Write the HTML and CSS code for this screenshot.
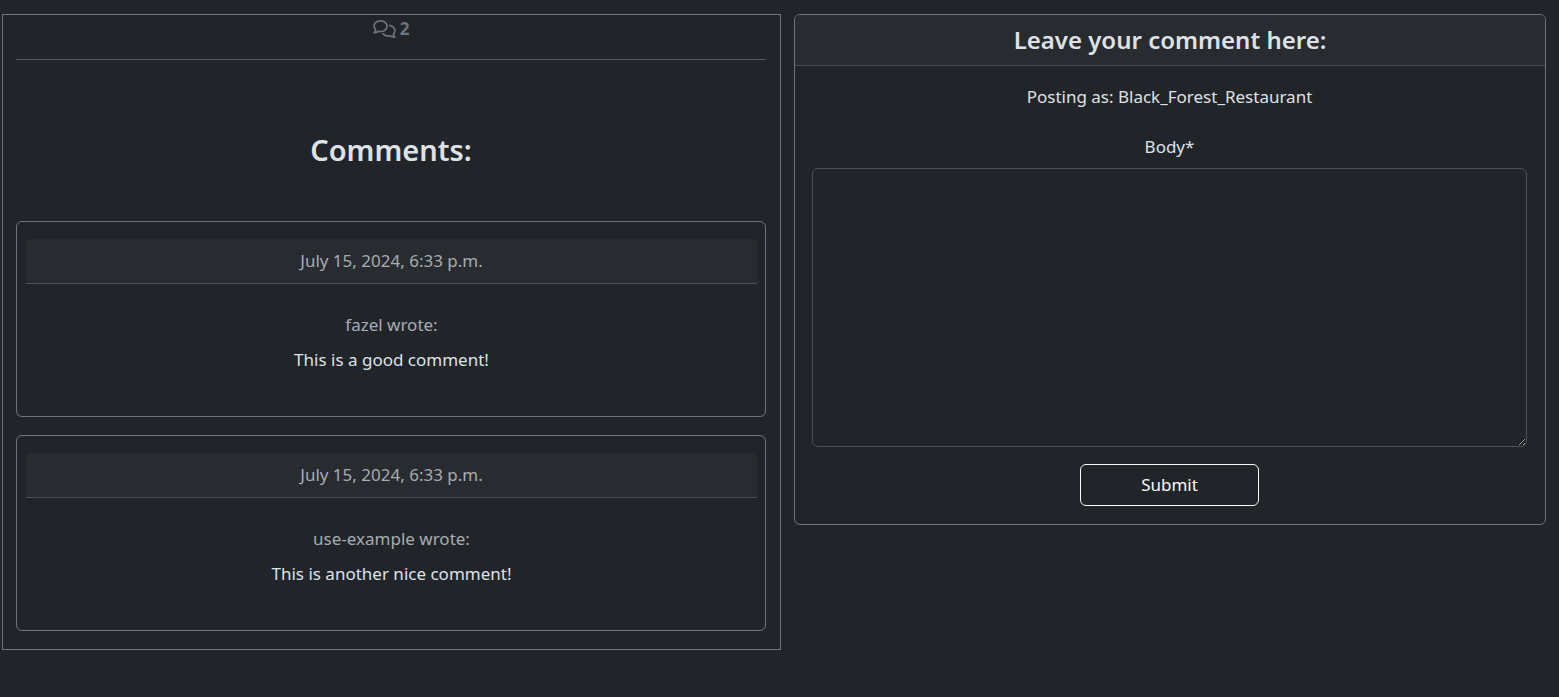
FILE: index.html
```html
<!DOCTYPE html>
<html lang="en">
<head>
<meta charset="utf-8">
<meta name="viewport" content="width=device-width, initial-scale=1">
<title>Comments</title>
<link rel="stylesheet" href="styles.css">
</head>
<body>
<main class="layout">
  <section class="comments">
    <p class="comment-count">
      <svg class="count-icon" viewBox="0 0 640 512" aria-hidden="true"><path fill="currentColor" d="M88.2 309.1c9.800-18.300 6.800-40.800-7.500-55.800C59.400 230.900 48 204 48 176c0-63.500 63.800-128 160-128s160 64.500 160 128s-63.800 128-160 128c-13.100 0-25.800-1.300-37.800-3.600c-10.400-2-21.200-.6-30.700 4.200c-4.100 2.100-8.300 4.100-12.600 6c-16 7.200-32.900 13.500-49.900 18c2.800-4.600 5.400-9.100 7.900-13.600c1.100-1.900 2.200-3.900 3.200-5.900zM208 352c114.900 0 208-78.800 208-176S322.900 0 208 0S0 78.800 0 176c0 41.800 17.200 80.100 45.900 110.300c-.9 1.700-1.900 3.500-2.800 5.100c-10.300 18.400-22.300 36.500-36.600 52.100c-6.600 7-8.300 17.200-4.600 25.900C5.800 378.300 14.400 384 24 384c43 0 86.500-13.300 122.700-29.700c4.800-2.200 9.600-4.500 14.200-6.800c15.100 3 30.900 4.500 47.100 4.500zM432 480c16.200 0 31.900-1.600 47.100-4.500c4.600 2.300 9.400 4.600 14.200 6.800C529.500 498.700 573 512 616 512c9.600 0 18.200-5.700 22-14.500c3.800-8.800 2-19-4.600-25.900c-14.200-15.600-26.200-33.700-36.600-52.100c-.9-1.700-1.900-3.400-2.800-5.100C622.800 384.100 640 345.800 640 304c0-94.400-87.900-171.500-198.200-175.800c4.100 15.200 6.200 31.200 6.200 47.800l0 .6c87.200 6.700 144 67.500 144 127.400c0 28-11.400 54.900-32.700 77.200c-14.300 15-17.300 37.600-7.500 55.800c1.100 2 2.200 4 3.200 5.900c2.500 4.500 5.200 9 7.900 13.600c-17-4.500-33.900-10.700-49.900-18c-4.300-1.900-8.500-3.900-12.600-6c-9.500-4.800-20.300-6.200-30.700-4.200c-12.100 2.400-24.700 3.600-37.800 3.600c-61.700 0-110-26.500-136.800-62.300c-16 5.400-32.800 9.400-50 11.800C279 439.800 350 480 432 480z"/></svg>
      <strong>2</strong>
    </p>
    <hr class="divider">
    <h2 class="comments-title">Comments:</h2>
    <div class="comment-list">
      <article class="comment">
        <header class="comment-date">July 15, 2024, 6:33 p.m.</header>
        <div class="comment-body">
          <p class="comment-author">fazel wrote:</p>
          <p>This is a good comment!</p>
        </div>
      </article>
      <article class="comment">
        <header class="comment-date">July 15, 2024, 6:33 p.m.</header>
        <div class="comment-body">
          <p class="comment-author">use-example wrote:</p>
          <p>This is another nice comment!</p>
        </div>
      </article>
    </div>
  </section>
  <section class="form-card">
    <h3 class="form-title">Leave your comment here:</h3>
    <form class="comment-form">
      <p class="posting-as">Posting as: Black_Forest_Restaurant</p>
      <label class="body-label" for="body">Body*</label>
      <textarea class="body-input" id="body" name="body" rows="10" required></textarea>
      <button class="submit" type="submit">Submit</button>
    </form>
  </section>
</main>
</body>
</html>
```
FILE: styles.css
```css
* {
  box-sizing: border-box;
}

body {
  margin: 0;
  background: #212529;
  color: #dee2e6;
  font: 17px/26px "Segoe UI", "Noto Sans", sans-serif;
  text-align: center;
}

p,
h2,
h3 {
  margin: 0;
}

.layout {
  display: grid;
  grid-template-columns: 779fr 752fr;
  align-items: start;
  gap: 13px;
  padding: 14px 13px 14px 2px;
}

.comments {
  border: 1px solid #6c757d;
  padding: 0 14px 18px 13px;
}

.comment-count {
  display: flex;
  justify-content: center;
  align-items: center;
  gap: 4px;
  height: 28px;
  color: #6c757d;
}

.count-icon {
  width: 23px;
  height: 18px;
}

.divider {
  margin: 16px 0 73px;
  border: 0;
  border-top: 1px solid #565b60;
}

.comments-title {
  font-size: 29px;
  font-weight: 600;
  line-height: 34px;
}

.comment-list {
  display: grid;
  gap: 18px;
  margin-top: 54px;
}

.comment {
  border: 1px solid #6c757d;
  border-radius: 6px;
  padding: 17px 8px 0 9px;
}

.comment-date {
  padding: 9px;
  background: #282b2f;
  border-bottom: 1px solid #495057;
  border-radius: 5px 5px 0 0;
  color: #a7acb1;
}

.comment-body {
  display: grid;
  gap: 9px;
  padding: 28px 18px 43px;
}

.comment-author {
  color: #a7acb1;
}

.form-card {
  border: 1px solid #6c757d;
  border-radius: 6px;
}

.form-title {
  padding: 9px 18px;
  background: #282b2f;
  border-bottom: 1px solid #495057;
  border-radius: 5px 5px 0 0;
  font-size: 24px;
  font-weight: 600;
  line-height: 32px;
}

.comment-form {
  display: flex;
  flex-direction: column;
  align-items: center;
  padding: 18px 18px 18px 17px;
}

.posting-as {
  margin-bottom: 24px;
}

.body-label {
  margin-bottom: 8px;
}

.body-input {
  width: 100%;
  height: 279px;
  padding: 7px 13px;
  background: #212529;
  border: 1px solid #495057;
  border-radius: 6px;
  color: inherit;
  font: inherit;
  resize: vertical;
  color-scheme: dark;
}

.submit {
  width: 25%;
  margin-top: 17px;
  padding: 7px 13px;
  background: transparent;
  border: 1px solid #f8f9fa;
  border-radius: 6px;
  color: #f8f9fa;
  font: inherit;
}
```
